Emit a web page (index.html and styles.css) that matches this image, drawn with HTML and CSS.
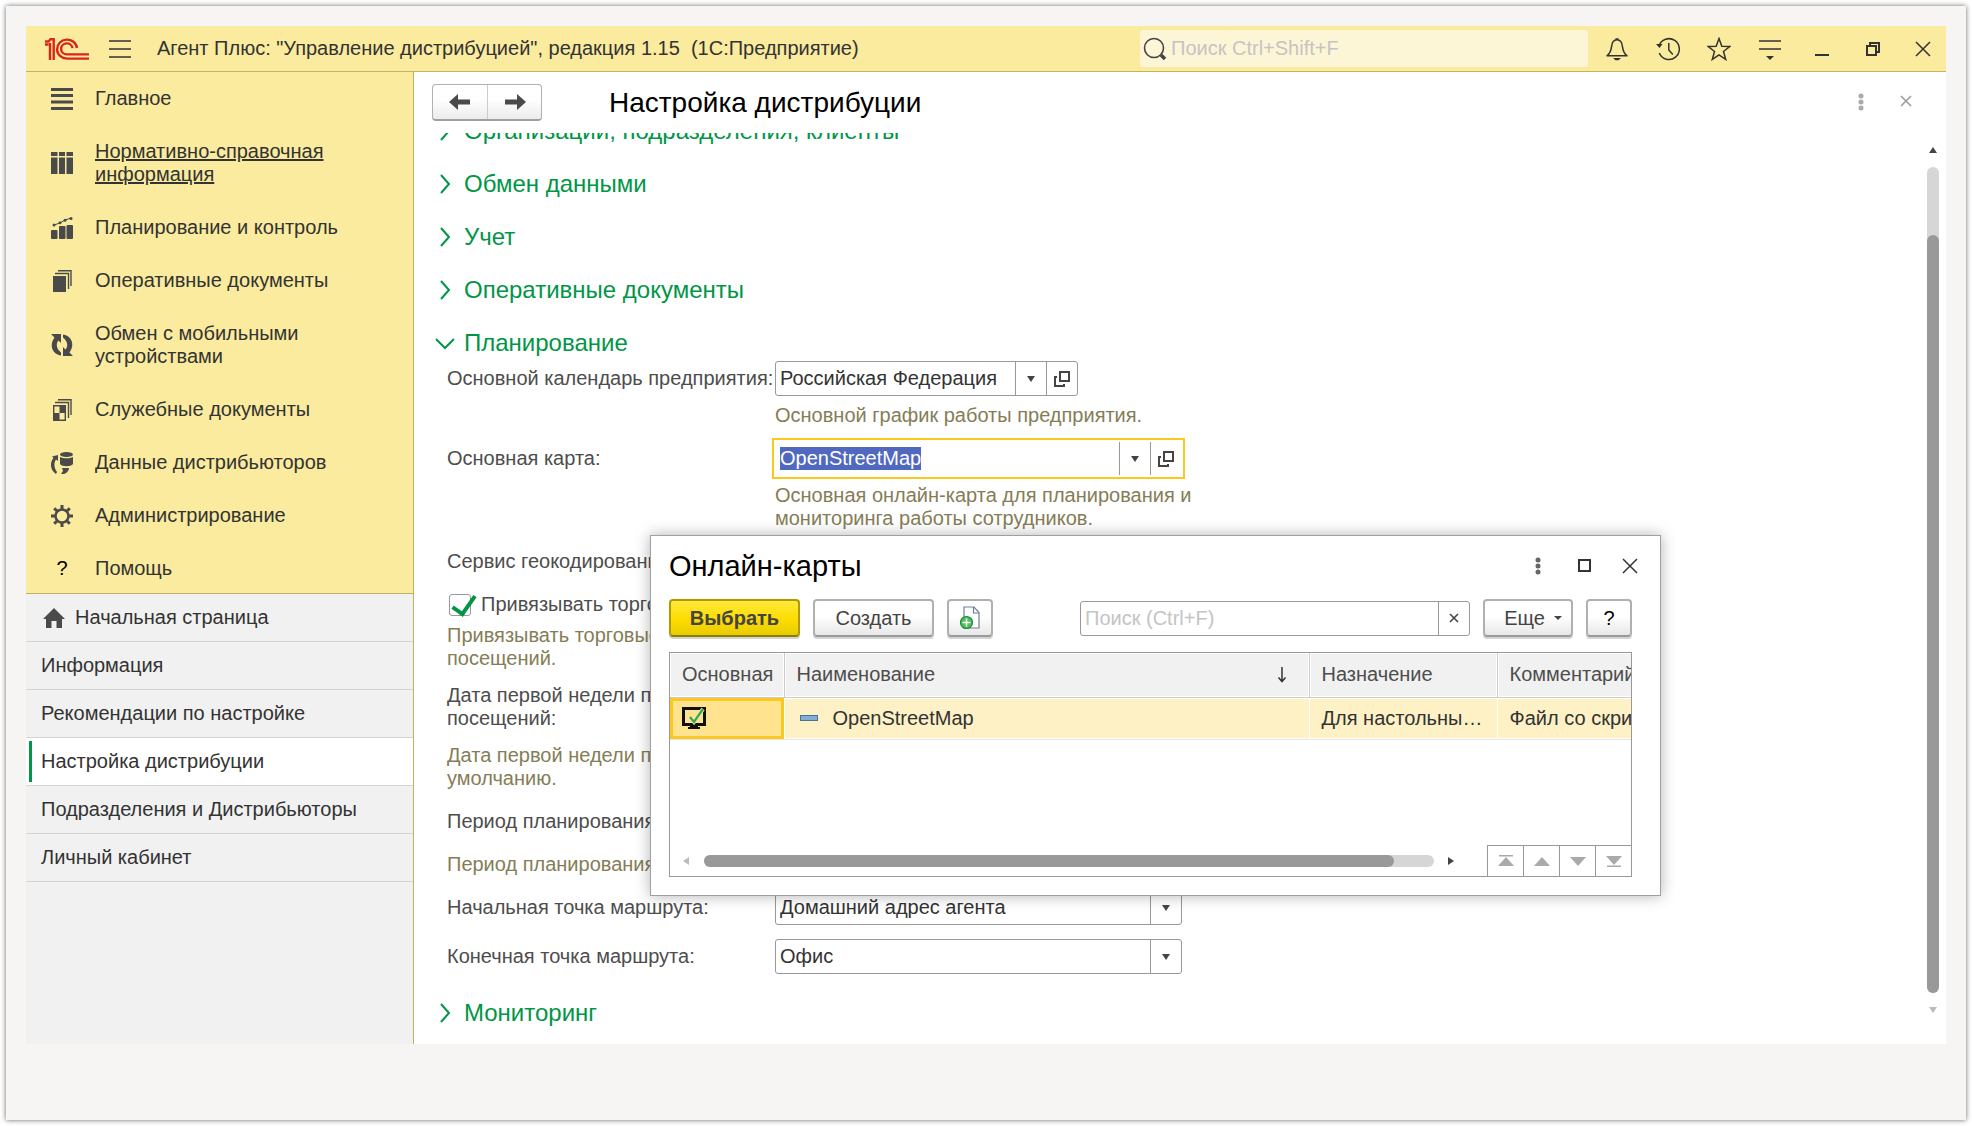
FILE: index.html
```html
<!DOCTYPE html>
<html lang="ru">
<head>
  <meta charset="UTF-8" />
  <title>Настройка дистрибуции</title>
  <link rel="stylesheet" href="styles.css">
</head>
<body>
  <div class="paper">
    <div class="app">
      <header class="topbar">
        <svg class="logo" width="44" height="22" viewBox="0 0 44 22" fill="none" stroke="#d9261c" stroke-width="2.4">
          <path d="M0 6.5h3.5M5 22V5M8.700 22V1.300H5.500L3.500 3.500H0"/>
          <path d="M32 10A10 9.500 0 1 0 22 20.600h22"/>
          <path d="M27.500 10.200A5.700 5.500 0 1 0 22 16.400h22"/>
        </svg>
        <button class="icon-btn burger" aria-label="Меню">
          <svg width="22" height="18" viewBox="0 0 22 18" fill="none" stroke="#333" stroke-width="1.5"><path d="M0 1h22M0 9h22M0 17h22"/></svg>
        </button>
        <div class="app-title">Агент Плюс: "Управление дистрибуцией", редакция 1.15&nbsp; (1С:Предприятие)</div>
        <label class="global-search">
          <svg width="24" height="24" viewBox="0 0 24 24" fill="none" stroke="#444"><circle cx="11" cy="11" r="9.5" stroke-width="1.6"/><path d="m18 18 4 4" stroke-width="3.5"/></svg>
          <input type="search" placeholder="Поиск Ctrl+Shift+F" aria-label="Поиск">
        </label>
        <div class="top-icons">
          <button class="icon-btn" aria-label="Уведомления">
            <svg width="24" height="24" viewBox="0 0 24 24" fill="none" stroke="#333" stroke-width="1.5"><path d="M2 18.8c3-2.500 4-4.500 4.500-9C7 5 9 2.800 12 2.800s5 2.200 5.500 7c.5 4.500 1.500 6.500 4.500 9z" stroke-linejoin="round"/><path d="M8 21h8l-2.500 2.300h-3zM10.500 1.200h3v1.600h-3z" fill="#333" stroke="none"/></svg>
          </button>
          <button class="icon-btn" aria-label="История">
            <svg width="24" height="24" viewBox="0 0 24 24" fill="none" stroke="#333" stroke-width="1.5"><path d="M3 9A10.400 10.400 0 1 1 3.300 16"/><path d="M12.800 6v7l4 4.500"/><path d="M0 7h6.500l-3 4z" fill="#333" stroke="none"/></svg>
          </button>
          <button class="icon-btn" aria-label="Избранное">
            <svg width="24" height="24" viewBox="0 0 24 24" fill="none" stroke="#333" stroke-width="1.5"><path d="m12 1.500 2.800 7.700 8 .3-6.300 5 2.200 7.900-6.700-4.600-6.700 4.600 2.200-7.900-6.300-5 8-.3z"/></svg>
          </button>
          <button class="icon-btn" aria-label="Настройки">
            <svg width="24" height="24" viewBox="0 0 24 24" fill="none" stroke="#333" stroke-width="1.500"><path d="M1 4h22M1 12h22"/><path d="M8 19h8l-4 4z" fill="#333" stroke="none"/></svg>
          </button>
          <button class="icon-btn" aria-label="Свернуть">
            <svg width="24" height="24" viewBox="0 0 24 24"><path d="M6 17h14v2H6z" fill="#333"/></svg>
          </button>
          <button class="icon-btn" aria-label="Восстановить">
            <svg width="24" height="24" viewBox="0 0 24 24" fill="none" stroke="#333" stroke-width="2"><path d="M7 9h9v9H7zM10 9V6h9v9h-3"/></svg>
          </button>
          <button class="icon-btn" aria-label="Закрыть">
            <svg width="24" height="24" viewBox="0 0 24 24" fill="none" stroke="#333" stroke-width="1.500"><path d="m5 5 14 14M19 5 5 19"/></svg>
          </button>
        </div>
      </header>

      <div class="workspace">
        <aside class="sidebar">
          <nav class="sections">
            <a href="#" class="section-link">
              <svg width="22" height="22" viewBox="0 0 22 22" fill="#4a4a4a"><path d="M0 0h22v3H0zM0 6h22v3H0zM0 12.500h22v3H0zM0 19h22v3H0z"/></svg>
              <span>Главное</span>
            </a>
            <a href="#" class="section-link current">
              <svg width="22" height="22" viewBox="0 0 22 22" fill="#4a4a4a"><path d="M0 0h6.500v4H0zM8 0h6v4H8zM15.500 0H22v4h-6.500zM0 5.500h6.500V22H0zM8 5.500h6V22H8zM15.500 5.500H22V22h-6.500z"/></svg>
              <span>Нормативно-справочная информация</span>
            </a>
            <a href="#" class="section-link">
              <svg width="22" height="22" viewBox="0 0 22 22" fill="#4a4a4a"><rect y="13" width="6.500" height="9" rx="1"/><rect x="8" y="9" width="6.500" height="13" rx="1"/><rect x="15.500" y="8" width="6.500" height="14" rx="1"/><path d="m3 8 6-2 5-3 6-2" fill="none" stroke="#4a4a4a"/><circle cx="3" cy="8" r="1.500"/><circle cx="9" cy="5.800" r="1.500"/><circle cx="14" cy="3.200" r="1.500"/><circle cx="20" cy="1.500" r="1.500"/></svg>
              <span>Планирование и контроль</span>
            </a>
            <a href="#" class="section-link">
              <svg width="22" height="22" viewBox="0 0 22 22" fill="#4a4a4a"><path d="M2 6h13v16H2z"/><path d="M4 3.500h13.500V19M7 .8h13V16" fill="none" stroke="#4a4a4a" stroke-width="1.400"/></svg>
              <span>Оперативные документы</span>
            </a>
            <a href="#" class="section-link">
              <svg width="22" height="22" viewBox="0 0 22 22" fill="#4a4a4a"><path d="M0 0h10v9L7.500 6.500C4.500 10 5.500 15 10 18.500v3C1 20-2 11.500 3.500 3.500z"/><path d="M22 22H12v-9l2.500 2.500C17.500 12 16.500 7 12 3.500v-3C21 2 24 10.500 18.500 18.500z"/></svg>
              <span>Обмен с мобильными устройствами</span>
            </a>
            <a href="#" class="section-link">
              <svg width="22" height="22" viewBox="0 0 22 22" fill="none" stroke="#4a4a4a" stroke-width="1.400"><path d="M2.700 6.700h11.600v14.600H2.700zM4 3.500h13.500V19M7 .8h13V16"/><path d="M8.500 7H14v7H8.500zM3 14h5.500v7H3z" fill="#4a4a4a" stroke="none"/></svg>
              <span>Служебные документы</span>
            </a>
            <a href="#" class="section-link">
              <svg width="22" height="22" viewBox="0 0 22 22" fill="#4a4a4a"><ellipse cx="15.500" cy="2.500" rx="6.500" ry="2.500"/><path d="M9 5c3 1.800 10 1.800 13 0v7c-2 3-11 3-13 0z"/><path d="M1 4.500 7 3v6L5 7.500C2.500 11 3 16 6 20l-1 2C-1 18-1.500 11 2.500 6z"/><path d="M11 16h7c0 3-3 5.500-5 6h-3l2-3z"/></svg>
              <span>Данные дистрибьюторов</span>
            </a>
            <a href="#" class="section-link">
              <svg width="22" height="22" viewBox="0 0 22 22" fill="none" stroke="#4a4a4a"><circle cx="11" cy="11" r="6.500" stroke-width="2.500"/><path d="M11 0v4M11 18v4M0 11h4M18 11h4M3.200 3.200 6 6M16 16l2.800 2.800M18.800 3.200 16 6M6 16l-2.800 2.800" stroke-width="3"/></svg>
              <span>Администрирование</span>
            </a>
            <a href="#" class="section-link">
              <span class="question">?</span>
              <span>Помощь</span>
            </a>
          </nav>
          <nav class="open-pages">
            <a href="#" class="page-link home">
              <svg width="22" height="20" viewBox="0 0 22 20" fill="#4a4a4a"><path d="m11 0 11 11h-3v9h-5.500v-7h-5v7H3v-9H0z"/></svg>
              Начальная страница
            </a>
            <a href="#" class="page-link">Информация</a>
            <a href="#" class="page-link">Рекомендации по настройке</a>
            <a href="#" class="page-link active">Настройка дистрибуции</a>
            <a href="#" class="page-link">Подразделения и Дистрибьюторы</a>
            <a href="#" class="page-link">Личный кабинет</a>
          </nav>
        </aside>

        <main class="form">
          <div class="form-header">
            <div class="history">
              <button aria-label="Назад"><svg width="22" height="16" viewBox="0 0 22 16" fill="#4a4a4a"><path d="M0 8 9 0v5.500h12v5H9V16z"/></svg></button>
              <button aria-label="Вперед"><svg width="22" height="16" viewBox="0 0 22 16" fill="#4a4a4a"><path d="m22 8-9-8v5.500H1v5h12V16z"/></svg></button>
            </div>
            <h1>Настройка дистрибуции</h1>
            <button class="icon-btn" aria-label="Действия">
              <svg width="24" height="24" viewBox="0 0 24 24" fill="#aaa"><circle cx="12" cy="5" r="2.500"/><circle cx="12" cy="11" r="2.500"/><circle cx="12" cy="17" r="2.500"/></svg>
            </button>
            <button class="icon-btn" aria-label="Закрыть форму">
              <svg width="24" height="24" viewBox="0 0 24 24" fill="none" stroke="#999" stroke-width="1.500"><path d="m7 5 10 10M17 5 7 15"/></svg>
            </button>
          </div>

          <div class="form-body">
            <div class="scroller">
              <div class="scrolled">
                <button class="group"><svg width="30" height="20" viewBox="0 0 30 20"><path d="m10 1 8 9-8 9"/></svg>Организации, подразделения, клиенты</button>
                <button class="group"><svg width="30" height="20" viewBox="0 0 30 20"><path d="m10 1 8 9-8 9"/></svg>Обмен данными</button>
                <button class="group"><svg width="30" height="20" viewBox="0 0 30 20"><path d="m10 1 8 9-8 9"/></svg>Учет</button>
                <button class="group"><svg width="30" height="20" viewBox="0 0 30 20"><path d="m10 1 8 9-8 9"/></svg>Оперативные документы</button>
                <button class="group open"><svg width="30" height="20" viewBox="0 0 30 20"><path d="m5 6 9 9 9-9"/></svg>Планирование</button>

                <div class="settings">
                  <div class="setting">
                    <label for="calendar">Основной календарь предприятия:</label>
                    <div class="field short">
                      <div class="select">
                        <select id="calendar"><option>Российская Федерация</option></select>
                        <span class="arrow"></span>
                      </div>
                      <button class="open-btn" aria-label="Открыть"><svg width="16" height="16" viewBox="0 0 16 16" fill="none" stroke="#444" stroke-width="2"><path d="M6 1h9v9H6zM3 6H1v9h9v-2"/></svg></button>
                    </div>
                    <p class="hint">Основной график работы предприятия.</p>
                  </div>
                  <div class="setting">
                    <label for="map">Основная карта:</label>
                    <div class="field focused">
                      <input type="text" id="map" value="OpenStreetMap">
                      <button class="open-btn" aria-label="Выбрать из списка"><span class="arrow"></span></button>
                      <button class="open-btn" aria-label="Открыть карту"><svg width="16" height="16" viewBox="0 0 16 16" fill="none" stroke="#444" stroke-width="2"><path d="M6 1h9v9H6zM3 6H1v9h9v-2"/></svg></button>
                    </div>
                    <p class="hint">Основная онлайн-карта для планирования и мониторинга работы сотрудников.</p>
                  </div>
                  <div class="setting">
                    <label for="geocoder">Сервис геокодирования:</label>
                    <div class="field">
                      <div class="select"><select id="geocoder"><option>OpenStreetMap</option></select><span class="arrow"></span></div>
                    </div>
                  </div>
                  <div class="check-setting">
                    <label class="check"><input type="checkbox" checked>Привязывать торговые точки</label>
                    <p class="hint">Привязывать торговые точки к плану<br>посещений.</p>
                  </div>
                  <div class="setting">
                    <label for="week">Дата первой недели планирования<br>посещений:</label>
                    <div class="field"><input type="text" id="week"></div>
                  </div>
                  <p class="hint">Дата первой недели планирования по<br>умолчанию.</p>
                  <div class="setting">
                    <label for="period">Период планирования:</label>
                    <div class="field"><input type="text" id="period"></div>
                  </div>
                  <p class="hint">Период планирования посещений.</p>
                  <div class="setting">
                    <label for="start">Начальная точка маршрута:</label>
                    <div class="field">
                      <div class="select"><select id="start"><option>Домашний адрес агента</option></select><span class="arrow"></span></div>
                    </div>
                  </div>
                  <div class="setting">
                    <label for="finish">Конечная точка маршрута:</label>
                    <div class="field">
                      <div class="select"><select id="finish"><option>Офис</option></select><span class="arrow"></span></div>
                    </div>
                  </div>
                </div>

                <button class="group last"><svg width="30" height="20" viewBox="0 0 30 20"><path d="m10 1 8 9-8 9"/></svg>Мониторинг</button>
              </div>
            </div>
            <div class="vscroll">
              <svg width="8" height="6" viewBox="0 0 8 6" fill="#444"><path d="m4 0 4 6H0z"/></svg>
              <div class="track"><div class="thumb"></div></div>
              <svg width="8" height="6" viewBox="0 0 8 6" fill="#bbb"><path d="m4 6 4-6H0z"/></svg>
            </div>
          </div>

          <section class="dialog" role="dialog" aria-labelledby="dialog-title">
            <div class="dialog-header">
              <h2 id="dialog-title">Онлайн-карты</h2>
              <button class="icon-btn" aria-label="Действия окна"><svg width="24" height="24" viewBox="0 0 24 24" fill="#666"><circle cx="12" cy="6" r="2.500"/><circle cx="12" cy="12" r="2.500"/><circle cx="12" cy="18" r="2.500"/></svg></button>
              <button class="icon-btn" aria-label="Развернуть"><svg width="24" height="24" viewBox="0 0 24 24" fill="none" stroke="#333" stroke-width="2"><path d="M7 6h11v11H7z"/></svg></button>
              <button class="icon-btn" aria-label="Закрыть окно"><svg width="24" height="24" viewBox="0 0 24 24" fill="none" stroke="#333" stroke-width="1.500"><path d="m5 5 14 14M19 5 5 19"/></svg></button>
            </div>
            <div class="toolbar">
              <button class="btn primary">Выбрать</button>
              <button class="btn create">Создать</button>
              <button class="btn icon" aria-label="Создать копированием">
                <svg width="22" height="24" viewBox="0 0 22 24" fill="none"><path d="M5 1h10l5 5.500V22H5z" fill="#fff" stroke="#6f7f95" stroke-width="1.200"/><path d="M14.500 1v6H20" stroke="#6f7f95" stroke-width="1.200"/><circle cx="7.500" cy="16.500" r="6" fill="#4fbf5c" stroke="#1c8a35" stroke-width="1.200"/><path d="M7.500 12.500v8M3.500 16.500h8" stroke="#fff" stroke-width="1.600"/></svg>
              </button>
              <div class="list-search">
                <input type="text" placeholder="Поиск (Ctrl+F)" aria-label="Поиск по списку">
                <button aria-label="Очистить"><svg width="10" height="10" viewBox="0 0 10 10" stroke="#444" stroke-width="1.600"><path d="m1 1 8 8M9 1 1 9"/></svg></button>
              </div>
              <button class="btn more">Еще <svg width="8" height="4" viewBox="0 0 8 4" fill="#444"><path d="M0 0h8L4 4z"/></svg></button>
              <button class="btn help">?</button>
            </div>
            <div class="list">
              <table>
                <colgroup><col class="c-main"><col class="c-name"><col class="c-purpose"><col class="c-comment"></colgroup>
                <thead>
                  <tr>
                    <th>Основная</th>
                    <th><div class="sorted">Наименование <svg width="10" height="16" viewBox="0 0 10 16" fill="none" stroke="#333" stroke-width="1.500"><path d="M5 0v14M1.500 10.500 5 14.500l3.500-4"/></svg></div></th>
                    <th>Назначение</th>
                    <th>Комментарий</th>
                  </tr>
                </thead>
                <tbody>
                  <tr>
                    <td class="selected">
                      <svg width="24" height="24" viewBox="0 0 24 24" fill="none"><path d="M1.500 2.500h21v16h-21z" stroke="#111" stroke-width="3"/><path d="M8 19h8v2h2v2H6v-2h2z" fill="#111"/><path d="m8 11 4 5L21 3" stroke="#ffe38f" stroke-width="4"/><path d="m8 11 4 5L21 3" stroke="#2fa85a" stroke-width="2.200"/></svg>
                    </td>
                    <td><div class="item"><span class="mark"></span>OpenStreetMap</div></td>
                    <td>Для настольных компьютеров</td>
                    <td>Файл со скриптом</td>
                  </tr>
                </tbody>
              </table>
              <div class="list-footer">
                <svg width="6" height="8" viewBox="0 0 6 8" fill="#bbb"><path d="M6 0v8L0 4z"/></svg>
                <div class="htrack"><div class="hthumb"></div></div>
                <svg width="6" height="8" viewBox="0 0 6 8" fill="#444"><path d="M0 0v8l6-4z"/></svg>
                <div class="pager">
                  <button aria-label="В начало"><svg width="16" height="12" viewBox="0 0 16 12" fill="#aaa"><path d="M1 0h14v1.500H1zM8 2l8 9H0z"/></svg></button>
                  <button aria-label="Вверх"><svg width="16" height="12" viewBox="0 0 16 12" fill="#aaa"><path d="m8 2 8 9H0z"/></svg></button>
                  <button aria-label="Вниз"><svg width="16" height="12" viewBox="0 0 16 12" fill="#aaa"><path d="m8 11 8-9H0z"/></svg></button>
                  <button aria-label="В конец"><svg width="16" height="12" viewBox="0 0 16 12" fill="#aaa"><path d="m8 10 8-9H0zM1 10.500h14V12H1z"/></svg></button>
                </div>
              </div>
            </div>
          </section>
        </main>
      </div>
    </div>
  </div>

  <script>
    const mapInput = document.getElementById('map');
    mapInput.focus({ preventScroll: true });
    mapInput.select();
  </script>
</body>
</html>
```

FILE: styles.css
```css
* {
  box-sizing: border-box;
}

body {
  margin: 0;
  padding: 6px;
  background: #fff;
  font-family: "Liberation Sans", Arial, sans-serif;
  font-size: 20px;
  line-height: 23px;
  color: #333;
}

button,
input,
select {
  font: inherit;
  color: inherit;
  margin: 0;
}

button {
  cursor: pointer;
}

svg {
  flex: none;
  display: block;
}

h1,
h2,
p {
  margin: 0;
}

.paper {
  min-height: calc(100vh - 12px);
  padding: 20px;
  background: #f6f5f3;
  box-shadow: 0 0 5px rgba(0, 0, 0, 0.6);
}

.app {
  background: #fff;
}

/* top bar */

.topbar {
  display: flex;
  align-items: center;
  height: 46px;
  padding-left: 19px;
  background: #faeb9e;
  border-bottom: 1px solid #c4b45c;
}

.icon-btn {
  display: flex;
  flex: none;
  align-items: center;
  justify-content: center;
  width: 24px;
  height: 24px;
  padding: 0;
  border: none;
  background: none;
}

.burger {
  margin-left: 19px;
}

.app-title {
  flex: 1;
  margin-left: 25px;
}

.global-search {
  display: flex;
  align-items: center;
  width: 448px;
  height: 37px;
  padding-left: 3px;
  gap: 4px;
  background: #fdf6d6;
  border-radius: 3px;
}

.global-search input {
  flex: 1;
  min-width: 0;
  padding: 0;
  border: none;
  outline: none;
  background: none;
}

input::placeholder {
  color: #c4c4c4;
  opacity: 1;
}

.top-icons {
  display: flex;
  gap: 27px;
  margin: 0 11px 0 17px;
}

/* sidebar */

.workspace {
  display: flex;
}

.sidebar {
  flex: none;
  width: 388px;
  background: #f1f1f1;
  border-right: 1px solid #c0b060;
}

.sections {
  background: #faeb9e;
  border-bottom: 1px solid #c0b060;
}

.section-link {
  display: flex;
  align-items: center;
  gap: 22px;
  padding: 15px 60px 15px 25px;
  color: #333;
  text-decoration: none;
}

.section-link.current span {
  text-decoration: underline;
}

.section-link:last-child {
  padding-bottom: 13px;
}

.question {
  width: 22px;
  text-align: center;
  color: #000;
}

.page-link {
  display: flex;
  align-items: center;
  gap: 10px;
  height: 48px;
  padding-left: 15px;
  border-bottom: 1px solid #d4d4d4;
  color: #333;
  text-decoration: none;
}

.page-link.home {
  padding-left: 17px;
}

.page-link.active {
  background: linear-gradient(#009646, #009646) 3px 3px / 3px 41px no-repeat #fff;
}

/* form */

.form {
  position: relative;
  display: flex;
  flex-direction: column;
  flex: 1;
  min-width: 0;
}

.form-header {
  display: flex;
  align-items: center;
  gap: 21px;
  height: 61px;
  padding: 0 28px 0 18px;
}

.form-header h1 {
  flex: 1;
  margin-left: 46px;
  font-size: 28px;
  line-height: 32px;
  font-weight: normal;
  color: #000;
}

.history {
  display: flex;
  height: 37px;
  border: 1px solid #b0b0b0;
  border-bottom: 2px solid #a0a0a0;
  border-radius: 4px;
  background: linear-gradient(#fff 40%, #ececec);
}

.history button {
  display: flex;
  align-items: center;
  justify-content: center;
  width: 54px;
  padding: 0;
  border: none;
  background: none;
}

.history button + button {
  border-left: 1px solid #ccc;
}

.form-body {
  display: flex;
  flex: 1;
}

.scroller {
  flex: 1;
  min-width: 0;
  overflow: hidden;
}

.scrolled {
  margin-top: -29px;
  padding-bottom: 5px;
}

.group {
  display: flex;
  align-items: center;
  gap: 3px;
  width: 100%;
  height: 53px;
  padding: 0 0 0 17px;
  border: none;
  background: none;
  font-size: 24px;
  text-align: left;
  color: #009646;
}

.group svg {
  fill: none;
  stroke: #009646;
  stroke-width: 2;
}

.group.open {
  margin-bottom: -8px;
}

.group.last {
  margin-top: 12px;
}

.settings {
  display: flex;
  flex-direction: column;
  gap: 14px;
  padding-left: 33px;
  color: #4d4d4d;
}

.setting {
  display: grid;
  grid-template-columns: 328px 424px;
  row-gap: 8px;
  align-items: center;
}

.setting .hint {
  grid-column: 2;
}

.hint {
  color: #857d56;
}

.field {
  display: flex;
  width: 407px;
  height: 35px;
  background: #fff;
  border: 1px solid #999;
  border-radius: 3px;
  color: #333;
}

.field.short {
  width: 303px;
}

.field.focused {
  border-color: transparent;
  border-radius: 0;
  outline: 2px solid #fac81e;
  outline-offset: 1px;
}

.field input {
  flex: 1;
  min-width: 0;
  padding: 0 4px;
  border: none;
  outline: none;
  background: none;
}

.field input::selection {
  background: #5068c0;
  color: #fff;
}

.select {
  position: relative;
  display: flex;
  flex: 1;
}

.select select {
  flex: 1;
  padding: 0 34px 0 4px;
  border: none;
  outline: none;
  background: none;
  appearance: none;
}

.select .arrow {
  position: absolute;
  top: 0;
  right: 0;
  bottom: 0;
  width: 31px;
  border-left: 1px solid #999;
  pointer-events: none;
}

.arrow {
  display: flex;
  align-items: center;
  justify-content: center;
}

.arrow::before {
  content: "";
  border: 4px solid transparent;
  border-top: 6px solid #444;
  border-bottom: none;
}

.open-btn {
  display: flex;
  flex: none;
  align-items: center;
  justify-content: center;
  width: 31px;
  padding: 0;
  border: none;
  border-left: 1px solid #999;
  background: none;
}

.check-setting {
  display: flex;
  flex-direction: column;
  gap: 8px;
}

.check {
  display: flex;
  align-items: center;
  gap: 10px;
}

.check input {
  position: relative;
  width: 22px;
  height: 22px;
  margin-left: 2px;
  border: 1px solid #999;
  border-radius: 3px;
  background: #fff;
  appearance: none;
}

.check input:checked::after {
  content: "";
  position: absolute;
  top: -4px;
  left: 7px;
  width: 10px;
  height: 20px;
  border: solid #009646;
  border-width: 0 4px 4px 0;
  transform: rotate(35deg);
}

.vscroll {
  display: flex;
  flex-direction: column;
  align-items: center;
  gap: 14px;
  width: 26px;
  padding: 14px 0 31px;
}

.track {
  flex: 1;
  width: 12px;
  padding-top: 68px;
  display: flex;
  background: #d6d6d6;
  border-radius: 6px;
}

.thumb {
  flex: 1;
  background: #999;
  border-radius: 6px;
}

/* dialog window */

.dialog {
  position: absolute;
  top: 463px;
  left: 236px;
  width: 1011px;
  padding: 12px 28px 18px 18px;
  background: #fff;
  border: 1px solid #a0a0a0;
  box-shadow: 0 0 14px rgba(0, 0, 0, 0.3);
}

.dialog-header {
  display: flex;
  align-items: center;
  gap: 22px;
  height: 36px;
  margin-right: -10px;
}

.dialog-header h2 {
  flex: 1;
  font-size: 29px;
  line-height: 32px;
  font-weight: normal;
  color: #000;
}

.toolbar {
  display: flex;
  align-items: center;
  margin: 15px 0;
}

.btn {
  display: flex;
  align-items: center;
  justify-content: center;
  height: 38px;
  padding: 0;
  border: 2px solid #b0b0b0;
  border-bottom-color: #999;
  border-radius: 4px;
  background: linear-gradient(#fff 45%, #e8e8e8);
  box-shadow: 0 2px 0 #d4d4d4;
  color: #444;
}

.btn.primary {
  width: 131px;
  border-color: #b09a00;
  border-bottom-color: #8f7d00;
  background: linear-gradient(#ffe93c, #fddc00 55%, #e8cc00);
  font-weight: bold;
}

.btn.create {
  width: 121px;
  margin: 0 13px;
}

.btn.icon {
  width: 46px;
}

.list-search {
  display: flex;
  flex: 1;
  height: 35px;
  margin: 0 13px 0 87px;
  border: 1px solid #999;
  border-radius: 3px;
}

.list-search input {
  flex: 1;
  min-width: 0;
  padding: 0 4px;
  border: none;
  outline: none;
  background: none;
}

.list-search button {
  display: flex;
  align-items: center;
  justify-content: center;
  width: 31px;
  padding: 0;
  border: none;
  border-left: 1px solid #999;
  background: none;
}

.btn.more {
  width: 90px;
  gap: 9px;
  padding-left: 10px;
}

.btn.help {
  width: 46px;
  margin-left: 13px;
  color: #000;
}

.list {
  display: flex;
  flex-direction: column;
  min-height: 225px;
  overflow: hidden;
  border: 1px solid #999;
}

table {
  width: 1019px;
  table-layout: fixed;
  border-collapse: collapse;
}

.c-main {
  width: 114px;
}

.c-name {
  width: 525px;
}

.c-purpose {
  width: 188px;
}

th,
td {
  padding: 0 6px 0 12px;
  overflow: hidden;
  text-align: left;
  text-overflow: ellipsis;
  white-space: nowrap;
}

td {
  padding-right: 12px;
}

th {
  height: 44px;
  background: #f1f1f1;
  border-right: 1px solid #ccc;
  border-bottom: 1px solid #ccc;
  box-shadow: inset 0 0 0 1px #fff;
  font-weight: normal;
  color: #4d4d4d;
}

td {
  height: 42px;
  background: #fdf1c5;
  border-right: 1px solid #fff;
  border-bottom: 1px solid #e4e4e4;
  box-shadow: inset 0 1px 0 #fff, inset 0 -1px 0 #fff;
}

td.selected {
  background: #ffe38f;
  box-shadow: inset 0 0 0 3px #fac81e;
}

.sorted {
  display: flex;
  align-items: center;
  justify-content: space-between;
  padding-right: 16px;
}

.item {
  display: flex;
  align-items: center;
  gap: 15px;
  padding-left: 3px;
}

.mark {
  width: 18px;
  height: 6px;
  background: #82aed6;
  border: 1px solid #4a7298;
}

.list-footer {
  display: flex;
  align-items: center;
  margin-top: auto;
  padding-left: 13px;
}

.htrack {
  width: 730px;
  height: 12px;
  margin: 0 14px 0 15px;
  padding-right: 40px;
  background: #d6d6d6;
  border-radius: 6px;
}

.hthumb {
  height: 100%;
  background: #999;
  border-radius: 6px;
}

.pager {
  display: flex;
  margin-left: auto;
  border-top: 1px solid #999;
}

.pager button {
  display: flex;
  align-items: center;
  justify-content: center;
  width: 36px;
  height: 30px;
  padding: 0;
  border: none;
  border-left: 1px solid #999;
  background: #fff;
}
```
